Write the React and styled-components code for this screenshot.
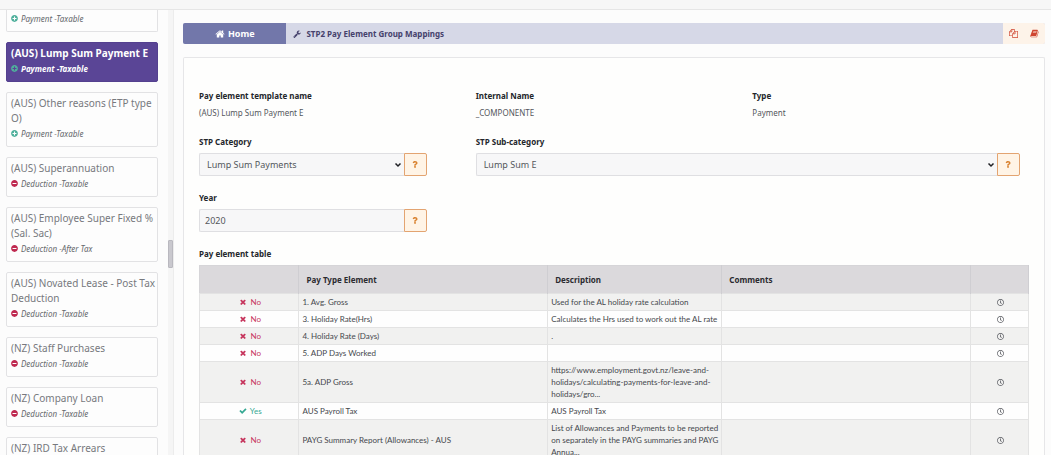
import { useState } from "react";
import styled, { createGlobalStyle } from "styled-components";
import { FaMinusCircle, FaPlusCircle, FaQuestion, FaRegClock } from "react-icons/fa";

const GlobalStyle = createGlobalStyle`
    * {
        box-sizing: border-box;
    }
    body {
        margin: 0;
        background-color: #fcfcfc;
        color: #54575c;
        font-family: "Noto Sans", "Open Sans", sans-serif;
        font-size: 8px;
    }
    button, input, select {
        font-family: inherit;
    }
`;

const Page = styled.div`
    height: 100vh;
    display: flex;
    flex-direction: column;
    overflow: hidden;
`;

const TopBar = styled.header`
    flex: none;
    height: 10px;
    background-color: #f7f7f7;
    border-bottom: 1px solid #e6e6e6;
`;

const Body = styled.div`
    flex: 1;
    min-height: 0;
    display: flex;
`;

const Sidebar = styled.aside`
    flex: none;
    width: 174px;
    display: flex;
    justify-content: space-between;
    border-right: 1px solid #ececec;
`;

const CardList = styled.nav`
    width: 158px;
    padding-left: 6px;
    display: flex;
    flex-direction: column;
    gap: 10px;
    overflow: hidden;
`;

const Card = styled.button`
    flex: none;
    width: 100%;
    padding: ${(props) => (props.$cut ? "1px 0 6px 4px" : "3px 0 6px 4px")};
    border: 1px solid ${(props) => (props.$active ? "#54408f" : "#e2e2e4")};
    border-top-width: ${(props) => (props.$cut ? "0" : "1px")};
    border-radius: ${(props) => (props.$cut ? "0 0 2px 2px" : "2px")};
    background-color: ${(props) => (props.$active ? "#5a4596" : "#fdfdfd")};
    color: ${(props) => (props.$active ? "#ffffff" : "#77797d")};
    font-weight: ${(props) => (props.$active ? "700" : "400")};
    text-align: left;
    cursor: pointer;
`;

const CardTitle = styled.div`
    font-size: 10px;
    line-height: 15px;
`;

const CardMeta = styled.div`
    display: flex;
    align-items: center;
    gap: 3px;
    height: 14px;
    font-size: 8px;
    font-style: italic;
    color: ${(props) => (props.$active ? "#ffffff" : "#66686c")};
    svg {
        width: 7px;
        height: 7px;
        color: ${(props) => (props.$plus ? "#4fb09c" : "#bf2950")};
    }
`;

const ScrollTrack = styled.div`
    width: 5px;
    background-color: #f5f5f5;
`;

const ScrollThumb = styled.div`
    height: 28px;
    margin-top: 230px;
    border: 1px solid #b9b8bf;
    border-radius: 1px;
    background-color: #c9c8ce;
`;

const Main = styled.main`
    flex: 1;
    min-width: 0;
    padding: 13px 6px 0 9px;
    display: flex;
    flex-direction: column;
    gap: 13px;
`;

const Breadcrumb = styled.nav`
    flex: none;
    height: 21px;
    display: flex;
    border-radius: 2px;
    overflow: hidden;
    background-color: #d6d8e7;
    font-weight: 700;
`;

const HomeLink = styled.a`
    width: 12%;
    display: flex;
    align-items: center;
    justify-content: center;
    gap: 3px;
    background-color: #7277aa;
    color: #ffffff;
    font-size: 9px;
    text-decoration: none;
`;

const Crumb = styled.div`
    flex: 1;
    padding-left: 7px;
    display: flex;
    align-items: center;
    gap: 5px;
    color: #45416c;
`;

const Tool = styled.button`
    width: 21px;
    padding: 0;
    border: 0;
    display: flex;
    align-items: center;
    justify-content: center;
    background-color: #fdf3e9;
    color: #cf4530;
    cursor: pointer;
`;

const Panel = styled.section`
    flex: 1;
    padding: 31px 15px 0;
    border: 1px solid #e6e6e8;
    border-bottom: 0;
    border-radius: 2px 2px 0 0;
    background-color: #fefefd;
`;

const FormGrid = styled.div`
    display: grid;
    grid-template-columns: repeat(3, 1fr);
    row-gap: 15px;
`;

const Field = styled.div`
    grid-column: ${(props) => (props.$wide ? "2 / span 2" : "auto")};
    padding-right: ${(props) => (props.$wide ? "9px" : "49px")};
`;

const Label = styled.label`
    display: block;
    color: #23262b;
    font-weight: 700;
    line-height: 14px;
`;

const Value = styled.div`
    margin-top: 3px;
    line-height: 14px;
`;

const Group = styled.div`
    display: flex;
    height: 23px;
    margin-top: 4px;
`;

const SelectBox = styled.div`
    flex: 1;
    min-width: 0;
    display: grid;
    align-items: center;
    select, svg {
        grid-area: 1 / 1;
    }
    svg {
        justify-self: end;
        margin-right: 2px;
        pointer-events: none;
    }
`;

const Select = styled.select`
    width: 100%;
    height: 100%;
    padding: 0 14px 0 7px;
    border: 1px solid #dfdfe2;
    border-right: 0;
    border-radius: 2px 0 0 2px;
    appearance: none;
    background-color: #f7f7f8;
    color: #54575c;
    font-size: 9px;
`;

const Input = styled.input`
    flex: 1;
    min-width: 0;
    padding: 0 5px;
    border: 1px solid #dfdfe2;
    border-right: 0;
    border-radius: 2px 0 0 2px;
    background-color: #f7f7f8;
    color: #54575c;
    font-size: 9px;
`;

const HelpButton = styled.button`
    width: 23px;
    padding: 0;
    border: 1px solid #e3a471;
    border-radius: 0 2px 2px 0;
    display: flex;
    align-items: center;
    justify-content: center;
    background-color: #fff4e6;
    color: #d9822f;
    cursor: pointer;
    svg {
        width: 6px;
        height: 7px;
    }
`;

const TableTitle = styled.h2`
    margin: 15px 0 4px;
    color: #23262b;
    font-size: 8px;
    font-weight: 700;
    line-height: 14px;
`;

const Table = styled.table`
    width: 100%;
    table-layout: fixed;
    border-collapse: collapse;
    border: 1px solid #d6d5d8;
    font-family: Lato, "Noto Sans", sans-serif;
    font-size: 8px;
    line-height: 12px;
`;

const Th = styled.th`
    width: ${(props) => props.$width};
    height: 28px;
    padding: 0 7px;
    border-right: 1px solid #cfced2;
    background-color: #dbd9dc;
    color: #2b2b30;
    font-family: "Noto Sans", sans-serif;
    font-weight: 700;
    text-align: left;
`;

const Row = styled.tr`
    background-color: #fefefe;
    &:nth-child(odd) {
        background-color: #f1f1f0;
    }
`;

const Td = styled.td`
    padding: 2px 1px 2px 3px;
    border: 1px solid #e3e3e3;
    color: #45484d;
    overflow-wrap: anywhere;
`;

const Status = styled.span`
    display: flex;
    align-items: center;
    justify-content: center;
    gap: 3px;
    height: 12px;
    color: ${(props) => (props.$yes ? "#35a893" : "#c6345c")};
`;

const RowButton = styled.button`
    display: flex;
    margin: 0 auto;
    padding: 0;
    border: 0;
    background: none;
    color: #55575d;
    cursor: pointer;
    svg {
        width: 7px;
        height: 7px;
    }
`;

const paths = {
    home: "M1472 992v480q0 26-19 45t-45 19h-384v-384h-256v384h-384q-26 0-45-19t-19-45v-480q0-1 .5-3t.5-3l575-474 575 474q1 2 1 6zm223-69l-62 74q-8 9-21 11h-3q-13 0-21-7l-692-577-692 577q-12 8-24 7-13-2-21-11l-62-74q-8-10-7-23.500t11-21.500l719-599q32-26 76-26t76 26l244 204v-195q0-14 9-23t23-9h192q14 0 23 9t9 23v408l219 182q10 8 11 21.500t-7 23.500z",
    wrench: "M448 1472q0-26-19-45t-45-19-45 19-19 45 19 45 45 19 45-19 19-45zm644-420l-682 682q-37 37-90 37-52 0-91-37l-106-108q-38-36-38-90 0-53 38-91l681-681q39 98 114.500 173.500t173.500 114.500zm634-435q0 39-23 106-47 134-164.500 217.500t-258.500 83.500q-185 0-316.500-131.500t-131.500-316.500 131.500-316.500 316.500-131.500q58 0 121.500 16.500t107.500 46.500q16 11 16 28t-16 28l-293 169v224l193 107q5-3 79-48.500t135.500-81 70.500-35.500q15 0 23.500 10t8.500 25z",
    copy: "M1696 384q40 0 68 28t28 68v1216q0 40-28 68t-68 28h-960q-40 0-68-28t-28-68v-288h-544q-40 0-68-28t-28-68v-672q0-40 20-88t48-76l408-408q28-28 76-48t88-20h416q40 0 68 28t28 68v328q68-40 128-40h416zm-544 213l-299 299h299v-299zm-640-384l-299 299h299v-299zm196 647l316-316v-416h-384v416q0 40-28 68t-68 28h-416v640h512v-256q0-40 20-88t48-76zm956 804v-1152h-384v416q0 40-28 68t-68 28h-416v640h896z",
    book: "M1703 478q40 57 18 129l-275 906q-19 64-76.500 107.500t-122.500 43.500h-923q-77 0-148.500-53.500t-99.500-131.500q-24-67-2-127 0-4 3-27t4-37q1-8-3-21.500t-3-19.500q2-11 8-21t16.500-23.500 16.500-23.500q23-38 45-91.500t30-91.500q3-10 .5-30t-.5-28q3-11 17-28t17-23q21-36 42-92t25-90q1-9-2.500-32t.5-28q4-13 22-30.500t22-22.500q19-26 42.500-84.500t27.500-96.500q1-8-3-25.500t-2-26.500q2-8 9-18t18-23 17-21q8-12 16.500-30.500t15-35 16-36 19.500-32 26.500-23.500 36-11.500 47.500 5.500l-1 3q38-9 51-9h761q74 0 114 56t18 130l-274 906q-36 119-71.500 153.500t-128.500 34.500h-869q-27 0-38 15-11 16-1 43 24 70 144 70h923q29 0 56-15.500t35-41.500l300-987q7-22 5-57 38 15 59 43zm-1064 2q-4 13 2 22.500t20 9.500h608q13 0 25.500-9.500t16.500-22.500l21-64q4-13-2-22.500t-20-9.500h-608q-13 0-25.500 9.500t-16.500 22.500zm-83 256q-4 13 2 22.500t20 9.500h608q13 0 25.500-9.500t16.500-22.500l21-64q4-13-2-22.500t-20-9.500h-608q-13 0-25.500 9.500t-16.500 22.500z",
    times: "M1490 1322q0 40-28 68l-136 136q-28 28-68 28t-68-28l-294-294-294 294q-28 28-68 28t-68-28l-136-136q-28-28-28-68t28-68l294-294-294-294q-28-28-28-68t28-68l136-136q28-28 68-28t68 28l294 294 294-294q28-28 68-28t68 28l136 136q28 28 28 68t-28 68l-294 294 294 294q28 28 28 68z",
    check: "M1671 566q0 40-28 68l-724 724-136 136q-28 28-68 28t-68-28l-136-136-362-362q-28-28-28-68t28-68l136-136q28-28 68-28t68 28l294 295 656-657q28-28 68-28t68 28l136 136q28 28 28 68z",
};

function Icon({ name, size }) {
    return (
        <svg viewBox="0 0 1792 1792" width={size} height={size} fill="currentColor" aria-hidden="true">
            <path d={paths[name]} />
        </svg>
    );
}

const elements = [
    { title: "(AUS) Lump Sum Payment E", meta: "Payment -Taxable" },
    { title: "(AUS) Other reasons (ETP type O)", meta: "Payment -Taxable" },
    { title: "(AUS) Superannuation", meta: "Deduction -Taxable" },
    { title: "(AUS) Employee Super Fixed % (Sal. Sac)", meta: "Deduction -After Tax" },
    { title: "(AUS) Novated Lease - Post Tax Deduction", meta: "Deduction -Taxable" },
    { title: "(NZ) Staff Purchases", meta: "Deduction -Taxable" },
    { title: "(NZ) Company Loan", meta: "Deduction -Taxable" },
    { title: "(NZ) IRD Tax Arrears", meta: "Deduction -Taxable" },
];

const rows = [
    { yes: false, name: "1. Avg. Gross", description: "Used for the AL holiday rate calculation" },
    { yes: false, name: "3. Holiday Rate(Hrs)", description: "Calculates the Hrs used to work out the AL rate" },
    { yes: false, name: "4. Holiday Rate (Days)", description: "." },
    { yes: false, name: "5. ADP Days Worked", description: "" },
    { yes: false, name: "5a. ADP Gross", description: "https://www.employment.govt.nz/leave-and-holidays/calculating-payments-for-leave-and-holidays/gro..." },
    { yes: true, name: "AUS Payroll Tax", description: "AUS Payroll Tax" },
    { yes: false, name: "PAYG Summary Report (Allowances) - AUS", description: "List of Allowances and Payments to be reported on separately in the PAYG summaries and PAYG Annua..." },
];

function Meta({ text, active }) {
    const plus = text.startsWith("Payment");
    return (
        <CardMeta $plus={plus} $active={active}>
            {plus ? <FaPlusCircle /> : <FaMinusCircle />}
            {text}
        </CardMeta>
    );
}

function ElementList() {
    const [selected, setSelected] = useState(0);

    return (
        <Sidebar>
            <CardList>
                <Card $cut>
                    <Meta text="Payment -Taxable" />
                </Card>
                {elements.map((e, i) => (
                    <Card key={e.title} $active={i === selected} onClick={() => setSelected(i)}>
                        <CardTitle>{e.title}</CardTitle>
                        <Meta text={e.meta} active={i === selected} />
                    </Card>
                ))}
            </CardList>
            <ScrollTrack>
                <ScrollThumb />
            </ScrollTrack>
        </Sidebar>
    );
}

function Dropdown({ id, option }) {
    return (
        <SelectBox>
            <Select id={id}>
                <option>{option}</option>
            </Select>
            <svg viewBox="0 0 8 8" width="8" height="8" fill="none" stroke="#1f2024" strokeWidth="1.5" aria-hidden="true">
                <path d="M1.500 2.500L4 5L6.500 2.500" />
            </svg>
        </SelectBox>
    );
}

function Help({ label }) {
    return (
        <HelpButton type="button" aria-label={label}>
            <FaQuestion />
        </HelpButton>
    );
}

function App() {
    const [year, setYear] = useState("2020");

    return (
        <Page>
            <GlobalStyle />
            <TopBar />
            <Body>
                <ElementList />
                <Main>
                    <Breadcrumb>
                        <HomeLink href="#">
                            <Icon name="home" size={10} />
                            Home
                        </HomeLink>
                        <Crumb>
                            <Icon name="wrench" size={8} />
                            STP2 Pay Element Group Mappings
                        </Crumb>
                        <Tool type="button" aria-label="Copy">
                            <Icon name="copy" size={9} />
                        </Tool>
                        <Tool type="button" aria-label="Guide">
                            <Icon name="book" size={9} />
                        </Tool>
                    </Breadcrumb>
                    <Panel>
                        <FormGrid>
                            <Field>
                                <Label as="div">Pay element template name</Label>
                                <Value>(AUS) Lump Sum Payment E</Value>
                            </Field>
                            <Field>
                                <Label as="div">Internal Name</Label>
                                <Value>_COMPONENTE</Value>
                            </Field>
                            <Field>
                                <Label as="div">Type</Label>
                                <Value>Payment</Value>
                            </Field>
                            <Field>
                                <Label htmlFor="category">STP Category</Label>
                                <Group>
                                    <Dropdown id="category" option="Lump Sum Payments" />
                                    <Help label="Category help" />
                                </Group>
                            </Field>
                            <Field $wide>
                                <Label htmlFor="subcategory">STP Sub-category</Label>
                                <Group>
                                    <Dropdown id="subcategory" option="Lump Sum E" />
                                    <Help label="Sub-category help" />
                                </Group>
                            </Field>
                            <Field>
                                <Label htmlFor="year">Year</Label>
                                <Group>
                                    <Input id="year" value={year} onChange={(e) => setYear(e.target.value)} />
                                    <Help label="Year help" />
                                </Group>
                            </Field>
                        </FormGrid>
                        <TableTitle>Pay element table</TableTitle>
                        <Table>
                            <thead>
                                <tr>
                                    <Th $width="12%" />
                                    <Th $width="30%">Pay Type Element</Th>
                                    <Th $width="21%">Description</Th>
                                    <Th $width="30%">Comments</Th>
                                    <Th $width="7%" />
                                </tr>
                            </thead>
                            <tbody>
                                {rows.map((e) => (
                                    <Row key={e.name}>
                                        <Td>
                                            <Status $yes={e.yes}>
                                                <Icon name={e.yes ? "check" : "times"} size={8} />
                                                {e.yes ? "Yes" : "No"}
                                            </Status>
                                        </Td>
                                        <Td>{e.name}</Td>
                                        <Td>{e.description}</Td>
                                        <Td />
                                        <Td>
                                            <RowButton type="button" aria-label="History">
                                                <FaRegClock />
                                            </RowButton>
                                        </Td>
                                    </Row>
                                ))}
                            </tbody>
                        </Table>
                    </Panel>
                </Main>
            </Body>
        </Page>
    );
}

export default App;
